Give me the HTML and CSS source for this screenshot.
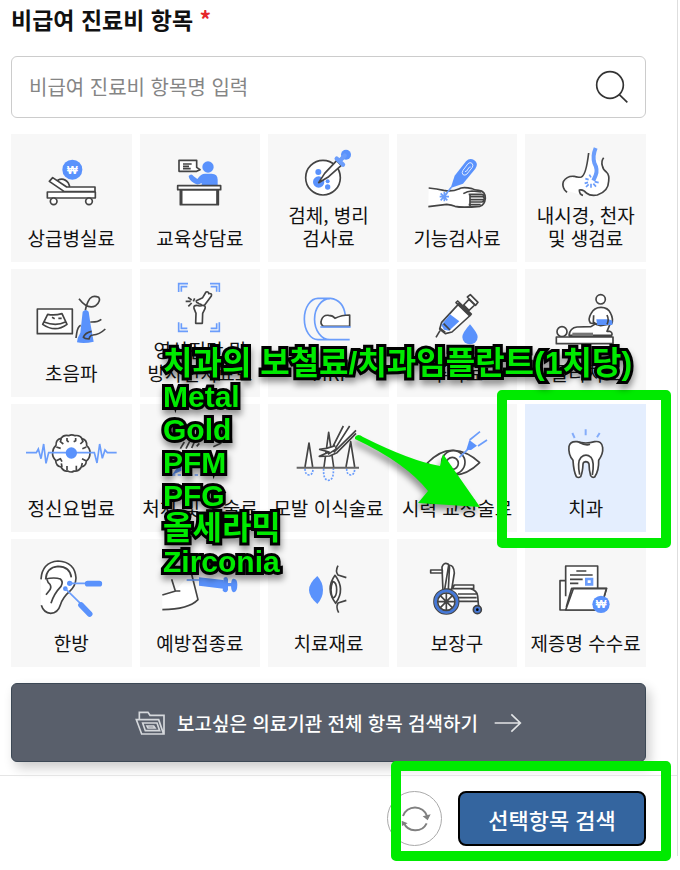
FILE: index.html
```html
<!DOCTYPE html>
<html lang="ko">
<head>
    <meta charset="UTF-8">
    <meta name="viewport" content="width=device-width, initial-scale=1.0">
    <title>비급여 진료비 항목</title>
    <link rel="stylesheet" href="styles.css">
</head>
<body>
    <main class="panel">
        <div class="content">
            <label class="title" for="itemSearch">비급여 진료비 항목 <span class="required">*</span></label>

            <div class="search">
                <input type="text" id="itemSearch" placeholder="비급여 진료비 항목명 입력">
                <button class="search-btn" type="button" aria-label="검색">
                    <svg width="34" height="34" viewBox="766 207 102 102" fill="none" stroke="#333" stroke-width="5">
                        <circle cx="811" cy="252" r="40"/>
                        <path d="M839 281l24 23"/>
                    </svg>
                </button>
            </div>

            <div class="items">
                <button class="item" type="button">
                    <svg class="icon" viewBox="64 82 300 180">
                        <circle class="blue" cx="218" cy="132" r="30"/>
                        <text class="won" x="218" y="144">₩</text>
                        <path class="line" d="M174 164q18-10 32 8l4 10M149 167l10-11 42 28h85v14H194zM143 199h144v18H143z"/>
                        <circle class="line" cx="162" cy="227" r="10"/>
                        <circle class="line" cx="268" cy="227" r="10"/>
                    </svg>
                    <span class="label">상급병실료</span>
                </button>
                <button class="item" type="button">
                    <svg class="icon" viewBox="450 82 300 180">
                        <circle class="blue" cx="624" cy="124" r="17"/>
                        <path class="blue" d="M566 151q8-10 15 1l11 8q11-16 23-16h20q18 0 18 18v18h-48v-8q-12 8-22 1-16-9-17-22z"/>
                        <path class="line" d="M537 104h53v21l10 7-10 5H537zM549 115h26M549 122h18M549 129h23M541 193h114v44H541zM533 180h129v12H533zM545 193v44M651 193v44"/>
                    </svg>
                    <span class="label">교육상담료</span>
                </button>
                <button class="item" type="button">
                    <svg class="icon" viewBox="55 49 300 180">
                        <circle class="line" cx="190" cy="156" r="52"/>
                        <circle class="blue" cx="176" cy="139" r="9"/>
                        <circle class="blue" cx="177" cy="169" r="17"/>
                        <circle class="blue" cx="204" cy="167" r="6"/>
                        <circle class="blue" cx="204" cy="184" r="8"/>
                        <path class="line" d="M177 171l18-28 36-38 14 14-38 34z"/>
                        <circle class="blue" cx="259" cy="87" r="15"/>
                        <path class="blue-line thick" d="M231 99l19 18M239 107l16-17"/>
                    </svg>
                    <span class="label two-line">검체, 병리<br>검사료</span>
                </button>
                <button class="item" type="button">
                    <svg class="icon" viewBox="441 82 300 180">
                        <path class="line" d="M505 243l55-7q15 2 25 6 20 5 75 0 14-5 16-24 0-22-20-24-14-1-20-5-28-7-40 1-20 9-45 4-20-5-45-7"/>
                        <path class="line" d="M610 204q12-8 26-8l28 3M626 206h40q8 2 6 8M632 213h37q6 3 3 9h-42M630 229h36q6-2 6-7M626 237h36M630 204v38"/>
                        <path class="blue" d="M572 187l12-37 34-43q11-12 24-4 15 10 4 26l-37 45z"/>
                        <path class="white-line" d="M609 134l15-20q6-6 12-1 5 5 1 12l-16 20q-6 6-12 2-5-5 0-13M615 138q6 0 9-8 4-8 8-6"/>
                        <path class="blue-line" d="M574 185l-23 29M553 199v28M539 213h28M542 203l20 21M562 202l-20 22"/>
                    </svg>
                    <span class="label">기능검사료</span>
                </button>
                <button class="item" type="button">
                    <svg class="icon" viewBox="827 49 300 180">
                        <path fill="#fff" d="M983 84q-6 60-18 68-50 0-56 40l46 14q20-14 36 1 62 0 54-52-14-22-14-40z"/>
                        <path class="line no-fill" d="M985 82q-8 67-22 72-12 2-22-2-21-2-32 16-4 12 4 25l7 7M1030 96q-8 10-4 24 2 12 12 19 10 9 7 28-1 31-34 41-20 4-33-6-9-12-21-9 0 14 11 16"/>
                        <path class="blue-line bold" d="M1006 67q-10 24-4 45 11 20 4 37l-7 16"/>
                        <path class="blue-line" d="M992 155l-5-8M985 162l-10-3M983 170l-10 3M985 176l-8 8M992 174v12M999 174l8 9M1003 168l12 3"/>
                    </svg>
                    <span class="label two-line">내시경, 천자<br>및 생검료</span>
                </button>

                <button class="item" type="button">
                    <svg class="icon" viewBox="64 75 300 180">
                        <path class="line" d="M113 138h105v74H113zM144 154q20 4 43-2l15 32q-35 26-73 0zM133 177q36 14 64 0M157 163l8 4M176 166h10"/>
                        <path class="line no-fill" d="M238 107q26 34 50 21 17-14 9-25-22-10-32 13-6 13-8 26"/>
                        <path class="blue" d="M249 146q9-10 18 0l6 40 9 50q-28 7-50 2 1-15 10-29z"/>
                        <path class="line no-fill" d="M243 187q-9 5-12 24l-2 14M272 177q22 1 33-8M317 198q-18 17-37 18-9 0-12 12-13 0-17-5 5-14 25-18"/>
                    </svg>
                    <span class="label">초음파</span>
                </button>
                <button class="item" type="button">
                    <svg class="icon" viewBox="450 42 300 180">
                        <path class="blue-line" d="M536 87V62h28M544 86V71h18M630 62h28v25M632 71h18v15M536 178v27h28M544 181v15h18M658 178v27h-28M650 181v15h-18"/>
                        <path class="line" d="M582 136q-2-9 8-9 10 4 19 0 9 1 6 10l-7 14-1 30h-20l1-30zM589 113l19-9 10-17q9-2 8 5 11-2 8 7l-20 27q-8 3-11-2-9-1-8-4-7-1-6-7z"/>
                        <path class="line" d="M557 115h15M564 103l11 8M575 120l-10 10M584 106l-4 9"/>
                    </svg>
                    <span class="label two-line">영상진단 및<br>방사선치료료</span>
                </button>
                <button class="item" type="button">
                    <svg class="icon" viewBox="55 75 300 180">
                        <path class="blue-line" d="M270 230h-95a41 62 0 0 1 0-124h37q39 4 45 51M211 107a46 61 0 0 0 0 123"/>
                        <path class="line" d="M191 190q-10-7-6-18 5-17 22-15 13 0 19 9 20-10 44-10v34z"/>
                        <path class="blue-line" d="M182 192h91"/>
                    </svg>
                    <span class="label">MRI</span>
                </button>
                <button class="item" type="button">
                    <svg class="icon" viewBox="441 75 300 180">
                        <path class="line" d="M528 223l12-20M597 122l35 34-56 51-20 5-17-14 6-20zM588 119l41 40 5-6-41-39zM611 126l16-17 17 17-17 16zM622 102l9-7 23 23-7 9z"/>
                        <path class="blue" d="M570 154l28 21-31 28-15-3-8-14z"/>
                        <path class="line no-fill" d="M551 182l19 19M539 195l17 13"/>
                        <path class="blue" d="M630 184q23 27 23 38a23 22 0 0 1-46 0q0-12 23-38z"/>
                    </svg>
                    <span class="label">주사료</span>
                </button>
                <button class="item" type="button">
                    <svg class="icon" viewBox="827 75 300 180">
                        <circle class="line" cx="1021" cy="109" r="14"/>
                        <circle class="line" cx="905" cy="206" r="15"/>
                        <path class="line" d="M888 222h170v20H888zM926 217q3-23 24-25l42-1 16-10h42l-10 24h8q10 4 6 12z"/>
                        <path class="line" d="M990 180q-8-11 2-28 9-19 30-19t29 18q9 18 3 31l-33 6-20-6z"/>
                        <path class="blue" d="M1008 169h37l11 4v13h-46z"/>
                        <path class="line no-fill" d="M1000 157l-1 20 11 8M1040 156q7 15 0 28"/>
                        <path fill="#777" d="M936 209h62v10h-62z"/>
                    </svg>
                    <span class="label">물리치료</span>
                </button>

                <button class="item" type="button">
                    <svg class="icon" viewBox="64 85 300 180">
                        <path class="line" d="M184 131q8-12 23-8 9-5 19 0 15-3 21 9 15 3 14 21 11 10 10 22 0 16-11 24-1 15-15 18-8 14-22 12-8 6-19 0-12 2-20-12-15-3-16-20-11-11-9-23 0-13 10-22-1-17 15-21z"/>
                        <path class="line no-fill" d="M185 131l-3 10 9 7M202 130v8l5 4M228 130v8l-6 3M246 131l4 9-8 8M170 157l13 4M260 157l-12 5M170 198l12-6 5 9M247 192l12 6M187 217l-2-11M202 214v13M230 213v14M245 216l3-11"/>
                        <path class="blue-line" d="M79 174h31l6-11 8 29 8-44 7 58 8-32h137l8 31 8-57 8 43 8-25 7 8h28"/>
                        <circle class="blue" cx="215" cy="175" r="17"/>
                    </svg>
                    <span class="label">정신요법료</span>
                </button>
                <button class="item" type="button">
                    <svg class="icon" viewBox="450 85 300 180">
                        <path class="line" d="M541 162l12-20M558 162l11-22M575 160l9-20M590 155l8-9M640 156l24-11"/>
                        <path class="blue" d="M516 241l28-40v27z"/>
                        <path class="blue-line" stroke-dasharray="10 7" d="M516 241h165"/>
                    </svg>
                    <span class="label">처치 및 수술료</span>
                </button>
                <button class="item" type="button">
                    <svg class="icon" viewBox="55 115 300 180">
                        <path class="line" d="M136 247l12-72 11 72M193 247l14-104 15 104M259 247l14-76 12 76"/>
                        <path class="blue-line" stroke-dasharray="6 4" d="M136 252q0 18 12 19 12-1 12-19M192 252q-2 34 14 35 17-1 15-35M261 252q0 18 12 19 12-1 12-19"/>
                        <path class="line" d="M251 124l-31 61-20 6-20 3 28 8-29 13 31-1 22-10 57-58M270 124l-43 67M289 137l-67 66M200 191l27-8M205 209l27-18"/>
                        <path class="line thick-line" d="M111 249h187"/>
                    </svg>
                    <span class="label">모발 이식술료</span>
                </button>
                <button class="item" type="button">
                    <svg class="icon" viewBox="441 115 300 180">
                        <path class="line" d="M502 235q39-40 78-38 42 2 79 37-39 38-78 37-42-1-79-36z"/>
                        <circle class="line" cx="580" cy="233" r="35"/>
                        <circle class="line" cx="577" cy="236" r="18"/>
                        <path class="blue-line" d="M598 218l35-33"/>
                        <path class="blue" d="M619 195l9-29 23 17-18 13z"/>
                        <path class="blue-line" d="M629 166l31-25M654 184l27-18"/>
                    </svg>
                    <span class="label">시력 교정술료</span>
                </button>
                <div class="item-wrap">
                    <button class="item selected" type="button" aria-pressed="true">
                        <svg class="icon" viewBox="827 115 300 180">
                            <path class="blue-line pale" d="M936 145l7 15M976 134v18M1018 145l-8 13"/>
                            <path class="line" d="M926 185q4-16 24-14 26 8 53 0 22-3 24 18 2 18-12 38 1 32-12 50-8 3-12-4-5-18-5-35-2-7-10-7-8 1-8 8-1 23-7 37-7 5-13 0-8-16-10-49-15-18-12-42z"/>
                            <path class="line no-fill" d="M956 173q20 11 33 6M958 270q-8-39 4-52 15-13 30 0 11 14 4 53"/>
                        </svg>
                        <span class="label">치과</span>
                    </button>
                    <span class="mark-box item-mark"></span>
                </div>

                <button class="item" type="button">
                    <svg class="icon" viewBox="64 85 300 180">
                        <path fill="#fff" d="M124 143q5-46 49-49 54 3 56 52-4 25-20 42-22 18-29 44-14 22-40 15-12-5-16-20z"/>
                        <path class="line no-fill" d="M124 149q3-51 51-55 51 3 54 51-1 24-19 40-21 18-28 41-7 24-29 25-21-1-28-24M138 149q2-36 37-39 36 1 40 33M137 148q28-6 45 0 10 8 2 22-22 23-30 51M142 150q2 9 9 14 6 10-3 20l-9 11"/>
                        <circle class="blue" cx="210" cy="161" r="8"/>
                        <circle class="blue" cx="197" cy="177" r="7"/>
                        <path class="blue-line" d="M210 161h47M197 177l45 44"/>
                        <path class="needle" d="M264 162h35M244 226l26 27"/>
                    </svg>
                    <span class="label">한방</span>
                </button>
                <button class="item" type="button">
                    <svg class="icon" viewBox="450 85 300 180">
                        <path fill="#fff" d="M487 196l39-12 46-54q14 42 22 77-39 34-107 34z"/>
                        <path class="line no-fill" d="M515 149l11 35h15M487 196l40-12M574 130l20 80q-28 29-107 30"/>
                        <path class="blue-line" d="M560 151h37"/>
                        <path class="blue" d="M597 143l73 8v26l-73-9zM671 145q10-7 13 4v32q-5 12-16 2zM684 160h12v10h-12zM700 147q12-1 12 18 0 20-10 23-8 0-9-19 0-21 7-22z"/>
                    </svg>
                    <span class="label">예방접종료</span>
                </button>
                <button class="item" type="button">
                    <svg class="icon" viewBox="55 85 300 180">
                        <path class="blue" d="M173 139q17 19 17 42t-17 42q-25-22-25-42t25-42z"/>
                        <path class="line no-fill" d="M235 108q-9 17 0 28l25 8M260 212l-25 8q-7 13 2 29"/>
                        <path class="line" d="M226 137q32 42 2 84-32-42-2-84z"/>
                        <path class="line" d="M219 155q12 3 12 25t-12 25q-10-24 0-50z"/>
                    </svg>
                    <span class="label">치료재료</span>
                </button>
                <button class="item" type="button">
                    <svg class="icon" viewBox="441 85 300 180">
                        <path class="line" d="M512 121h35v9h-35zM566 107q15-3 17 23l-8 49h-21zM546 112q5-15 18-9 6 5 4 18l-3 58-16 7zM573 177h58q20 5 22 22l3 35M583 166h58v11h-64zM594 193h55M594 204h56M594 215h58"/>
                        <circle class="line" cx="559" cy="216" r="37"/>
                        <circle class="blue-line wheel" cx="559" cy="216" r="32"/>
                        <circle class="line no-fill" cx="559" cy="216" r="26"/>
                        <path class="line" d="M559 190v52M533 216h52M541 198l36 36M577 198l-36 36"/>
                        <circle class="line caster" cx="652" cy="240" r="12"/>
                        <circle cx="652" cy="240" r="4"/>
                    </svg>
                    <span class="label">보장구</span>
                </button>
                <button class="item" type="button">
                    <svg class="icon" viewBox="827 85 300 180">
                        <path class="line" d="M914 153h-15v88h120l20-65H934l-16 56M916 200v-91h96v66"/>
                        <path class="line" d="M948 124h30M929 136h68M929 149h38M929 161h25M939 177h99l-18 64H916z"/>
                        <path class="blue-line stamp" d="M978 148h17v16h-17z"/>
                        <circle class="blue" cx="1022" cy="224" r="26"/>
                        <text class="won" x="1022" y="236">₩</text>
                    </svg>
                    <span class="label">제증명 수수료</span>
                </button>

                <!-- Guide text drawn over the items -->
                <div class="guide">
                    <p class="guide-ko">치과의 보철료/치과임플란트(1치당)</p>
                    <p>Metal</p>
                    <p>Gold</p>
                    <p>PFM</p>
                    <p>PFG</p>
                    <p class="guide-ko">올세라믹</p>
                    <p>Zirconia</p>
                </div>
                <svg class="guide-arrow" width="128" height="76" viewBox="0 0 128 76">
                    <path d="M2 3Q5-1 10 3Q58 27 87 32L90 20L127 73L65 69L75 57Q53 29 2 5z"/>
                </svg>
            </div>

            <button class="all-btn" type="button">
                <svg width="30" height="24" viewBox="414 124 90 72" fill="none" stroke="#d5d8dc" stroke-width="5">
                    <path d="M427 147v-19h26l6 9h42v56h-67l-16-43h67l14 41M437 160h43l8 23h-43zM450 169h20l4 6h-21z"/>
                </svg>
                <span>보고싶은 의료기관 전체 항목 검색하기</span>
                <svg class="arrow" width="28" height="20" viewBox="364 127 84 60" fill="none" stroke="#e2e4e6" stroke-width="5">
                    <path d="M366 157h76M416 131l27 26-27 26"/>
                </svg>
            </button>
        </div>

        <div class="footer">
            <button class="reset-btn" type="button" aria-label="초기화">
                <svg width="32" height="30" viewBox="85 400 96 90" fill="none" stroke="#808080" stroke-width="6">
                    <path d="M97 436a38 38 0 0 1 72 0M168 458a38 38 0 0 1-69-2"/>
                    <path fill="#808080" stroke="none" d="M156 437l24-6-9 18zM93 450l18 8-17 8z"/>
                </svg>
            </button>
            <button class="submit-btn" type="button">선택항목 검색</button>
            <span class="mark-box footer-mark"></span>
        </div>
    </main>
</body>
</html>
```

FILE: styles.css
```css
* {
    box-sizing: border-box;
}

body {
    min-height: 100vh;
    margin: 0;
    background-color: #fff;
    color: #111;
    font-family: "Noto Sans CJK KR", sans-serif;
}

button,
input {
    font-family: inherit;
    color: inherit;
}

button {
    margin: 0;
    padding: 0;
    cursor: pointer;
}

.panel {
    margin-right: 2px;
    border-right: 1px solid #dedede;
}

.content {
    padding: 3px 31px 13px 11px;
}

.title {
    display: block;
    margin-bottom: 21px;
    font-size: 23px;
    font-weight: 700;
    line-height: 32px;
}

.required {
    color: #e5262c;
}

.search {
    display: flex;
    align-items: center;
    height: 62px;
    margin-bottom: 16px;
    padding: 0 16px 0 17px;
    border: 1px solid #ccc;
    border-radius: 6px;
}

.search input {
    flex: 1;
    min-width: 0;
    padding: 0;
    border: none;
    outline: none;
    background: none;
    font-size: 20px;
    line-height: 30px;
}

.search input::placeholder {
    color: #858585;
    opacity: 1;
}

.search-btn {
    display: flex;
    border: none;
    background: none;
}

/* Item grid */
.items {
    position: relative;
    display: grid;
    grid-template-columns: repeat(5, minmax(0, 1fr));
    gap: 7px 8px;
    margin-bottom: 16px;
}

.item {
    display: flex;
    flex-direction: column;
    align-items: center;
    justify-content: flex-end;
    width: 100%;
    height: 128px;
    padding-bottom: 13px;
    border: none;
    background-color: #f7f7f7;
}

.item.selected {
    background-color: #e4eefe;
}

.item-wrap {
    position: relative;
}

.label {
    margin-top: 13px;
    font-size: 19px;
    line-height: 23px;
    white-space: nowrap;
}

.label.two-line {
    margin-top: 1px;
}

/* Icons */
.icon {
    width: 100px;
    height: 60px;
    overflow: visible;
}

.line {
    fill: #fff;
    stroke: #444;
    stroke-width: 5;
    stroke-linejoin: round;
}

.no-fill {
    fill: none;
}

.thick-line {
    stroke: #666;
    stroke-width: 6;
}

.blue {
    fill: #5a92fc;
}

.blue-line {
    fill: none;
    stroke: #6b9dfb;
    stroke-width: 5;
}

.blue-line.bold {
    stroke-width: 12;
}

.blue-line.thick {
    stroke-width: 13;
    stroke-linecap: round;
}

.blue-line.wheel {
    stroke: #4679d8;
    stroke-width: 9;
}

.blue-line.pale {
    stroke: #85adfa;
    stroke-width: 6;
}

.blue-line.stamp {
    stroke-width: 8;
}

.line.caster {
    fill: #4679d8;
}

.white-line {
    fill: none;
    stroke: #dce8ff;
    stroke-width: 3;
}

.needle {
    stroke: #5a92fc;
    stroke-width: 17;
    stroke-linecap: round;
}

.won {
    fill: #fff;
    font-family: "Liberation Sans", sans-serif;
    font-size: 34px;
    font-weight: 700;
    text-anchor: middle;
}

/* Guide marks */
.guide {
    position: absolute;
    top: 213px;
    left: 152px;
    color: #00ea00;
    font-family: "Liberation Sans", "Noto Sans CJK KR", sans-serif;
    font-size: 30px;
    font-weight: 700;
    line-height: 33px;
    white-space: nowrap;
    -webkit-text-stroke: 6px #000;
    paint-order: stroke fill;
    stroke-linejoin: round;
    filter: drop-shadow(1px 5px 3px rgba(0, 0, 0, 0.4));
    pointer-events: none;
}

.guide p {
    height: 33px;
    margin: 0;
}

.guide .guide-ko {
    font-size: 32px;
}

.guide-arrow {
    position: absolute;
    top: 300px;
    left: 342px;
    overflow: visible;
    fill: #00ea00;
    filter: drop-shadow(-2px 5px 3px rgba(0, 0, 0, 0.4));
    pointer-events: none;
}

.mark-box {
    position: absolute;
    border: 10px solid #00ea00;
    border-radius: 5px;
    pointer-events: none;
}

.item-mark {
    inset: -14px -25px -16px -28px;
}

.footer-mark {
    top: -15px;
    right: 6px;
    bottom: -5px;
    width: 280px;
}

/* Buttons */
.all-btn {
    display: flex;
    align-items: center;
    justify-content: center;
    gap: 12px;
    width: 100%;
    height: 79px;
    border: 1px solid #3c4855;
    border-radius: 6px;
    background-color: #595f6b;
    box-shadow: 4px 6px 12px rgba(0, 0, 0, 0.2);
    color: #fff;
    font-size: 19px;
    font-weight: 500;
}

.all-btn .arrow {
    margin-left: 4px;
}

.footer {
    position: relative;
    display: flex;
    justify-content: flex-end;
    gap: 16px;
    padding: 15px 31px 10px 11px;
    border-top: 1px solid #e5e5e5;
}

.reset-btn {
    display: flex;
    align-items: center;
    justify-content: center;
    width: 55px;
    height: 55px;
    border: 1px solid #aaa;
    border-radius: 50%;
    background-color: #fff;
}

.submit-btn {
    width: 188px;
    height: 55px;
    border: 2px solid #000;
    border-radius: 8px;
    background-color: #34659f;
    color: #fff;
    font-size: 22px;
    font-weight: 500;
}
```
